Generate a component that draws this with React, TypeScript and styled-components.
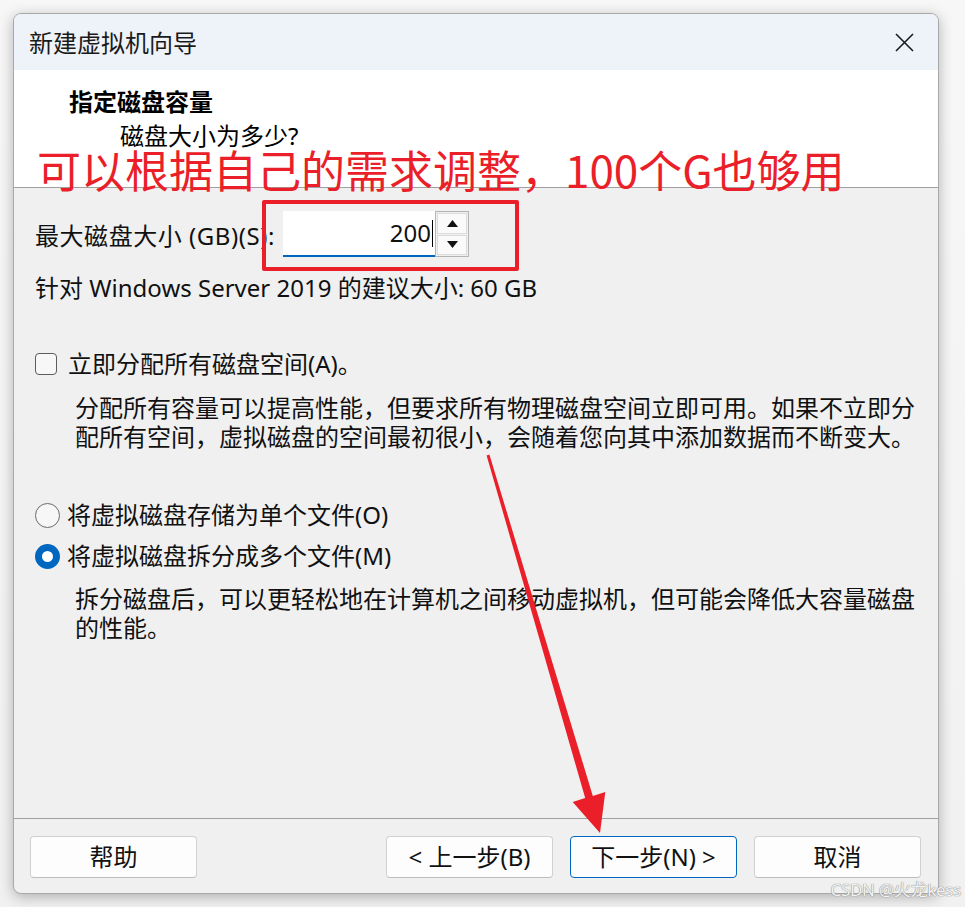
import React from "react";
import styled, { createGlobalStyle } from "styled-components";

const GlobalStyle = createGlobalStyle`
  html, body { margin: 0; padding: 0; background: #f4f4f4; }
  body { font-family: "Noto Sans", "Noto Sans CJK SC", sans-serif; color: #111; }
`;

const Page = styled.div`
  position: relative;
  width: 965px;
  height: 907px;
  box-sizing: border-box;
  padding: 13px 0 0 13px;
  background: linear-gradient(180deg, #f7f7f7 0%, #f1f1f1 100%);
  overflow: hidden;
`;

const Window = styled.div`
  width: 926px;
  height: 881px;
  box-sizing: border-box;
  border: 1px solid #a9a9a9;
  border-radius: 8px;
  overflow: hidden;
  display: flex;
  flex-direction: column;
  background: #f0f0f0;
  box-shadow: 0 3px 14px rgba(0, 0, 0, 0.28);
`;

const TitleBar = styled.div`
  height: 56px;
  flex: none;
  background: #eef2f9;
  display: flex;
  align-items: center;
  justify-content: space-between;
  padding: 0 24px 0 15px;
`;

const TitleText = styled.div`
  font-size: 24px;
  line-height: 30px;
  color: #1a1a1a;
  font-family: "Noto Sans CJK SC", sans-serif;
`;

const CloseIcon = styled.svg`
  width: 19px;
  height: 19px;
  display: block;
`;

const Header = styled.div`
  flex: none;
  background: #ffffff;
  border-bottom: 1px solid #a0a0a0;
  padding-top: 16px;
  box-sizing: content-box;
  height: 101px;
`;

const HeaderTitle = styled.div`
  padding-left: 55px;
  font-size: 24px;
  line-height: 30px;
  font-weight: 700;
  font-family: "Noto Sans CJK SC", sans-serif;
  color: #000;
`;

const HeaderSub = styled.div`
  margin-top: 6px;
  padding-left: 106px;
  font-size: 24px;
  line-height: 28px;
  color: #000;
`;

const Body = styled.div`
  height: 630px;
  flex: none;
  box-sizing: border-box;
  padding: 22px 0 0 21px;
  display: flex;
  flex-direction: column;
  font-size: 24px;
`;

const SizeRow = styled.div`
  height: 48px;
  display: flex;
  align-items: flex-start;
`;

const SizeLabel = styled.div`
  width: 248px;
  line-height: 30px;
  padding-top: 11px;
  white-space: nowrap;
  letter-spacing: 0.55px;
`;

const SpinField = styled.div`
  margin-top: 1px;
  width: 152px;
  height: 46px;
  box-sizing: border-box;
  background: #ffffff;
  border-bottom: 2px solid #0067c0;
  display: flex;
  align-items: center;
  justify-content: flex-end;
  padding-right: 2px;
  line-height: 30px;
`;

const Caret = styled.span`
  display: inline-block;
  width: 1px;
  height: 27px;
  background: #000;
  margin-left: 1px;
`;

const Spinner = styled.div`
  margin-top: 1px;
  width: 34px;
  height: 46px;
  box-sizing: border-box;
  border: 1px solid #b4b4b4;
  display: flex;
  flex-direction: column;
  background: #f0f0f0;
`;

const SpinButton = styled.div<{ $down?: boolean }>`
  flex: 1;
  display: flex;
  align-items: center;
  justify-content: center;
  background: #fafafa;
  border: 1px solid #dcdcdc;
  margin: 1px;
  margin-top: ${(p) => (p.$down ? "0" : "1px")};
`;

const Tri = styled.svg`
  width: 11px;
  height: 7px;
  display: block;
`;

const Recommend = styled.div`
  margin-top: 15px;
  line-height: 30px;
  white-space: nowrap;
`;

const OptionRow = styled.label<{ $mt: number; $gap: number }>`
  margin-top: ${(p) => p.$mt}px;
  height: 30px;
  display: flex;
  align-items: center;
  gap: ${(p) => p.$gap}px;
  line-height: 30px;
  white-space: nowrap;
`;

const CheckBox = styled.span`
  width: 22px;
  height: 22px;
  box-sizing: border-box;
  border: 1.5px solid #5c5c5c;
  border-radius: 4px;
  background: #f7f7f7;
  flex: none;
`;

const Radio = styled.span<{ $on?: boolean }>`
  width: 25px;
  height: 25px;
  box-sizing: border-box;
  border-radius: 50%;
  flex: none;
  border: ${(p) => (p.$on ? "7.5px solid #0067c0" : "1.5px solid #6a6a6a")};
  background: ${(p) => (p.$on ? "#ffffff" : "#f7f7f7")};
`;

const Desc = styled.p<{ $mt: number }>`
  margin: ${(p) => p.$mt}px 0 0 0;
  padding-left: 40px;
  width: 845px;
  box-sizing: content-box;
  line-height: 29px;
  color: #111;
`;

const Footer = styled.div`
  flex: 1;
  border-top: 1px solid #a0a0a0;
  display: flex;
  align-items: flex-start;
  padding: 17px 17px 0 16px;
  gap: 17px;
`;

const Spacer = styled.div`
  flex: 1;
`;

const Button = styled.button<{ $primary?: boolean }>`
  width: 167px;
  height: 42px;
  box-sizing: border-box;
  border-radius: 4px;
  background: #fdfdfd;
  border: 1px solid ${(p) => (p.$primary ? "#0067c0" : "#d0d0d0")};
  border-bottom-color: ${(p) => (p.$primary ? "#0067c0" : "#bdbdbd")};
  font-family: "Noto Sans", "Noto Sans CJK SC", sans-serif;
  font-size: 24px;
  line-height: 30px;
  color: #111;
  padding: 0;
  display: flex;
  align-items: center;
  justify-content: center;
`;

const Annotation = styled.div`
  position: absolute;
  left: 37px;
  top: 150px;
  font-family: "Noto Sans CJK SC", sans-serif;
  font-size: 44px;
  line-height: 38px;
  color: #ea1f29;
  white-space: nowrap;
`;

const RedBox = styled.div`
  position: absolute;
  left: 262px;
  top: 200px;
  width: 257px;
  height: 71px;
  box-sizing: border-box;
  border: 4.5px solid #ea1f29;
  border-radius: 2px;
`;

const Overlay = styled.svg`
  position: absolute;
  left: 0;
  top: 0;
  width: 965px;
  height: 907px;
  pointer-events: none;
`;

const Watermark = styled.div`
  position: absolute;
  right: 4px;
  bottom: 6px;
  font-family: "Noto Sans", "Noto Sans CJK SC", sans-serif;
  font-size: 17px;
  line-height: 22px;
  color: #f2f2f2;
  text-shadow: 0 0 1px #8a8a8a, 0 0 1px #8a8a8a;
  letter-spacing: -0.3px;
`;

export default function App() {
  return (
    <>
      <GlobalStyle />
      <Page>
        <Window>
          <TitleBar>
            <TitleText>新建虚拟机向导</TitleText>
            <CloseIcon viewBox="0 0 19 19">
              <path d="M1 1 L18 18 M18 1 L1 18" stroke="#1a1a1a" strokeWidth="1.6" fill="none" />
            </CloseIcon>
          </TitleBar>
          <Header>
            <HeaderTitle>指定磁盘容量</HeaderTitle>
            <HeaderSub>磁盘大小为多少?</HeaderSub>
          </Header>
          <Body>
            <SizeRow>
              <SizeLabel>最大磁盘大小 (GB)(S):</SizeLabel>
              <SpinField>
                200
                <Caret />
              </SpinField>
              <Spinner>
                <SpinButton>
                  <Tri viewBox="0 0 11 7">
                    <path d="M5.5 0 L11 7 L0 7 Z" fill="#111" />
                  </Tri>
                </SpinButton>
                <SpinButton $down>
                  <Tri viewBox="0 0 11 7">
                    <path d="M0 0 L11 0 L5.5 7 Z" fill="#111" />
                  </Tri>
                </SpinButton>
              </Spinner>
            </SizeRow>
            <Recommend>针对 Windows Server 2019 的建议大小: 60 GB</Recommend>
            <OptionRow $mt={46} $gap={11}>
              <CheckBox />
              立即分配所有磁盘空间(A)。
            </OptionRow>
            <Desc $mt={14}>
              分配所有容量可以提高性能，但要求所有物理磁盘空间立即可用。如果不立即分配所有空间，虚拟磁盘的空间最初很小，会随着您向其中添加数据而不断变大。
            </Desc>
            <OptionRow $mt={49} $gap={7}>
              <Radio />
              将虚拟磁盘存储为单个文件(O)
            </OptionRow>
            <OptionRow $mt={11} $gap={7}>
              <Radio $on />
              将虚拟磁盘拆分成多个文件(M)
            </OptionRow>
            <Desc $mt={13}>
              拆分磁盘后，可以更轻松地在计算机之间移动虚拟机，但可能会降低大容量磁盘的性能。
            </Desc>
          </Body>
          <Footer>
            <Button>帮助</Button>
            <Spacer />
            <Button>&lt; 上一步(B)</Button>
            <Button $primary>下一步(N) &gt;</Button>
            <Button>取消</Button>
          </Footer>
        </Window>
        <Annotation>可以根据自己的需求调整，100个G也够用</Annotation>
        <RedBox />
        <Overlay viewBox="0 0 965 907">
          <polygon
            points="486.6,455.4 489.4,454.6 592.8,795.9 605.3,792.1 600,833 572.7,801.9 585.2,798.1"
            fill="#ea1f29"
          />
        </Overlay>
        <Watermark>CSDN @火龙kess</Watermark>
      </Page>
    </>
  );
}
